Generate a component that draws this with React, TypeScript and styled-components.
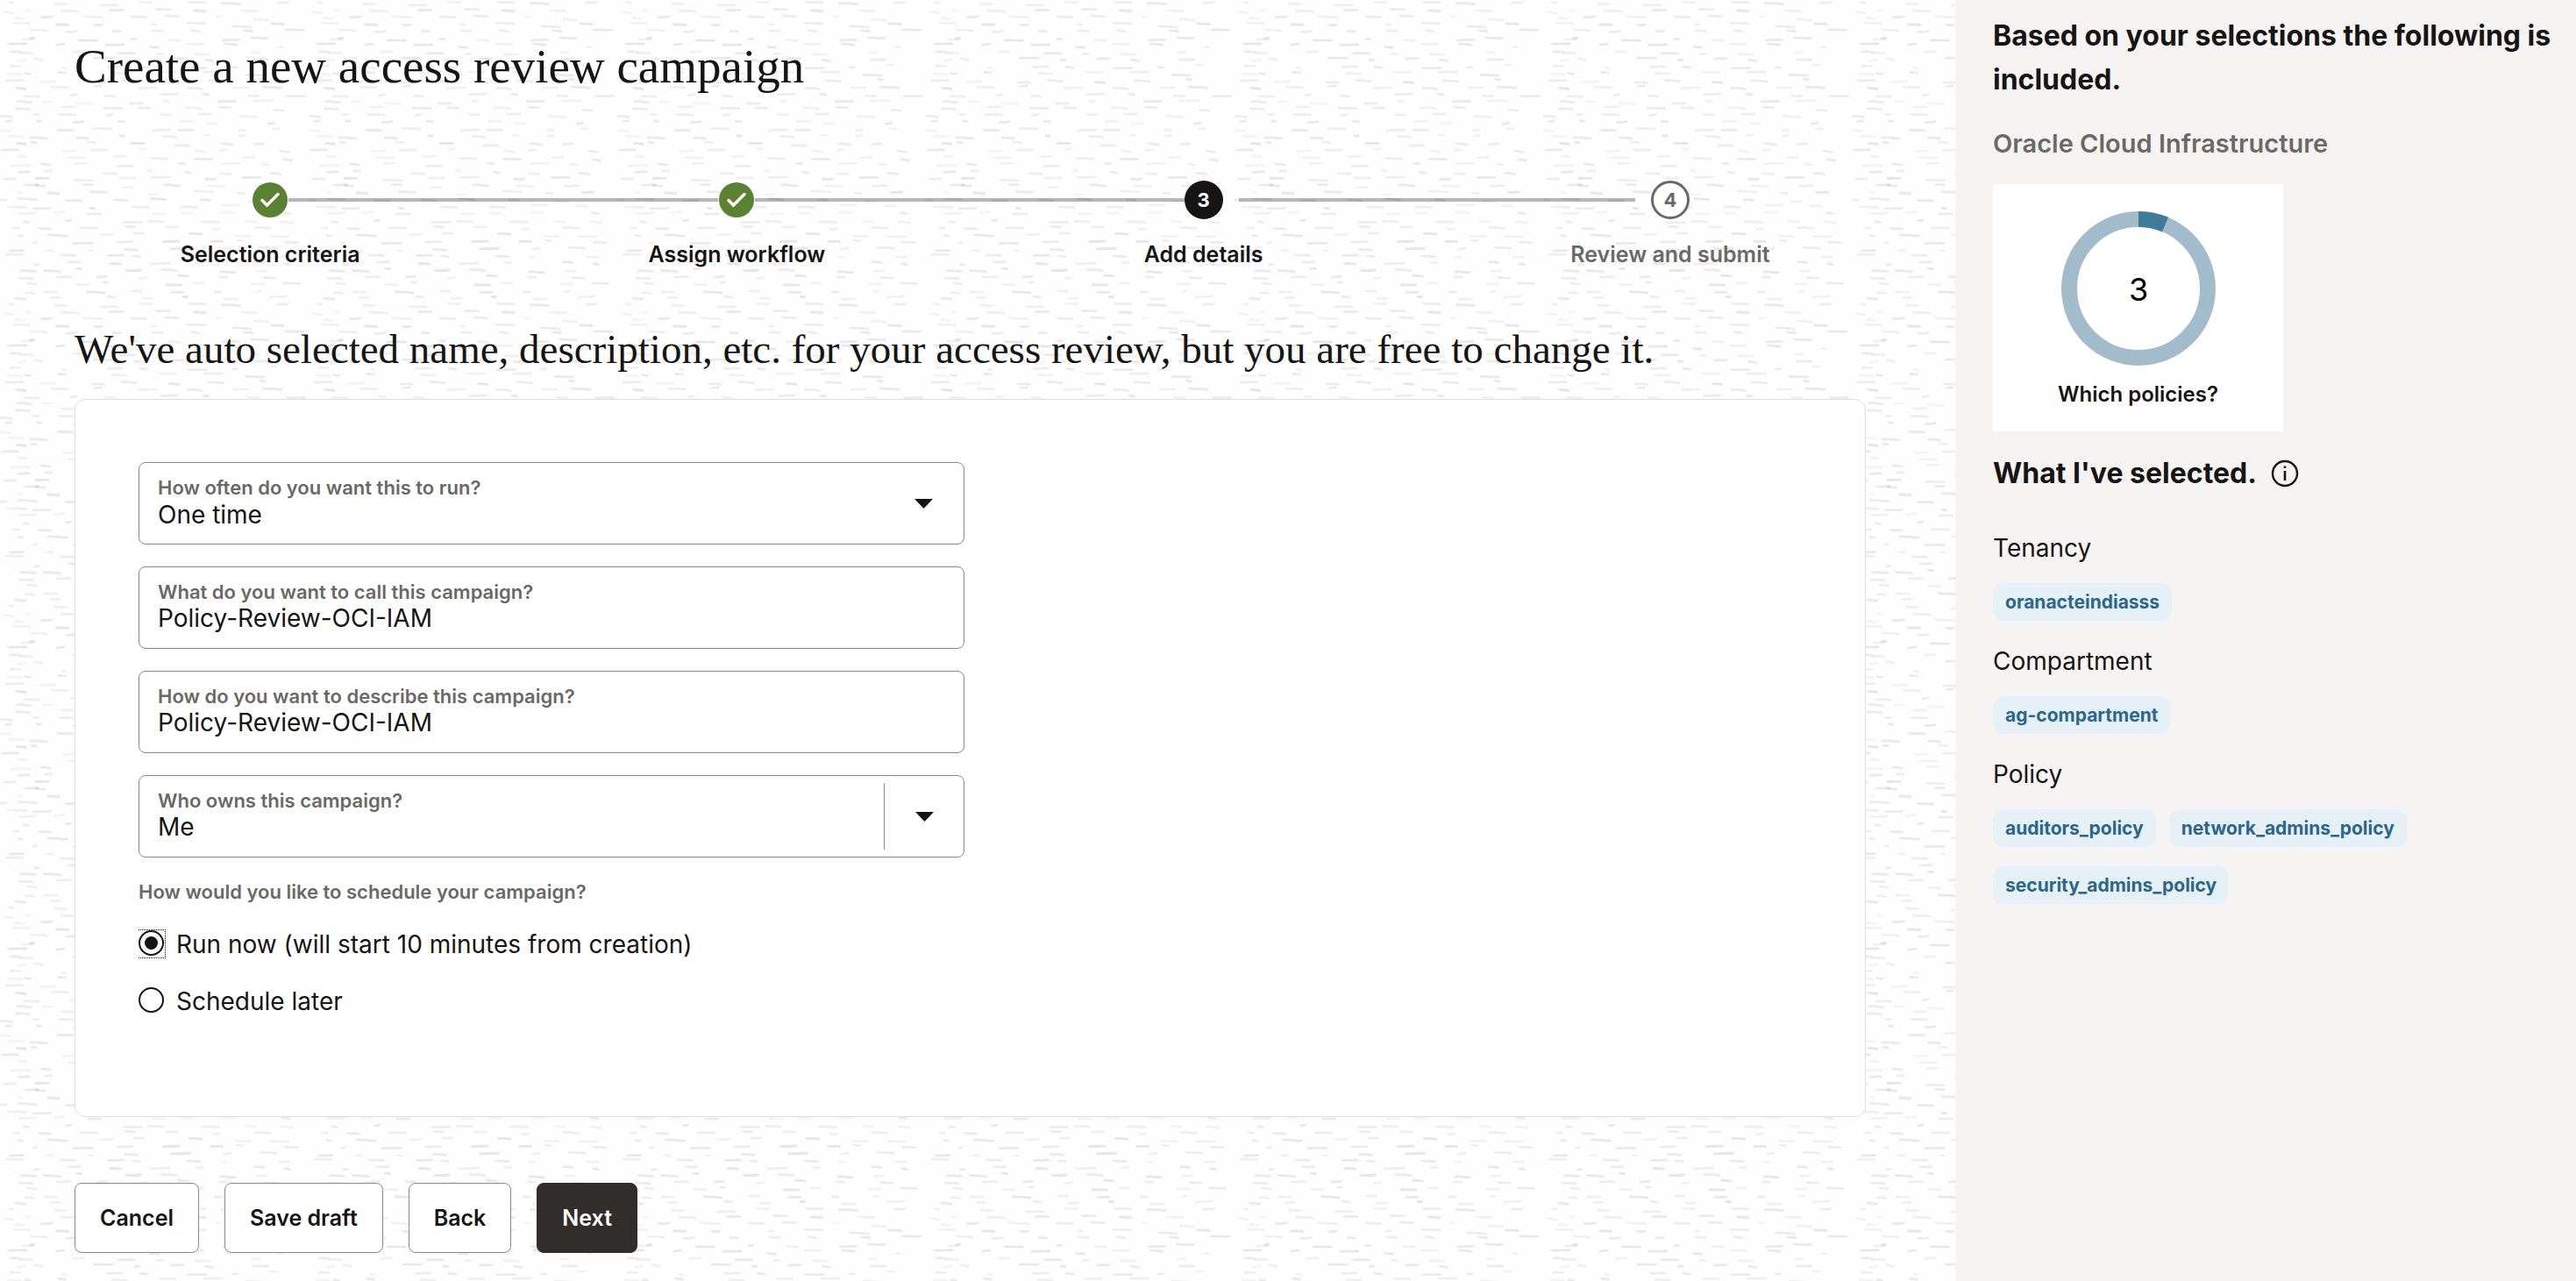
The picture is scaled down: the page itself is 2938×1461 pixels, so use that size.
import React, { useState } from "react";
import styled, { createGlobalStyle } from "styled-components";

const ink = "#161513";
const muted = "#6b6966";
const line = "#8b8986";
const sans = `Inter, "Liberation Sans", sans-serif`;
const serif = `Georgia, "Liberation Serif", serif`;

/* A repeating tile of faint, slightly tilted brush strokes. */
function strokeTile(): string {
  let seed = 4177;
  const next = () => {
    seed = (seed * 16807) % 2147483647;
    return seed / 2147483647;
  };
  const width = 352;
  const height = 344;
  const parts: string[] = [];
  for (let row = 0; row < 43; row++) {
    for (let col = 0; col < 7; col++) {
      const length = 4 + next() * 17;
      const x = (col * 50 + (row % 3) * 17 + next() * 24) % (width - 24);
      const y = row * 8 + 2 + next() * 4;
      const tilt = next() * 1.8 - 0.6;
      const shade = 0.04 + next() * 0.05;
      parts.push(
        `<path d="M${x.toFixed(1)} ${y.toFixed(1)}l${(length / 2).toFixed(1)} ${(tilt * 0.3).toFixed(1)}l${(length / 2).toFixed(1)} ${(tilt * 0.7).toFixed(1)}" stroke-opacity="${shade.toFixed(2)}"/>`
      );
    }
  }
  const svg = `<svg xmlns="http://www.w3.org/2000/svg" width="${width}" height="${height}"><g fill="none" stroke="#000" stroke-width="2.8" stroke-linecap="round">${parts.join("")}</g></svg>`;
  return `url("data:image/svg+xml,${encodeURIComponent(svg)}")`;
}

const texture = strokeTile();

const GlobalStyle = createGlobalStyle`
  *, *::before, *::after { box-sizing: border-box; }
  body { margin: 0; color: ${ink}; font-family: ${sans}; background: #fff; }
  h1, h2, h3, p, ol, ul, fieldset { margin: 0; padding: 0; border: 0; }
  ol, ul { list-style: none; }
  button, input, select { font: inherit; color: inherit; }
`;

const Page = styled.div`
  display: grid;
  grid-template-columns: minmax(0, 1fr) 708px;
  min-height: 100vh;
`;

const Main = styled.main`
  padding: 42px 59px 30px 42px;
  background-color: #fefefe;
  background-image: ${texture};
`;

const Inset = styled.div`
  margin: 0 43px;
`;

const Title = styled.h1`
  font: 400 55px/68px ${serif};
`;

const Subtitle = styled.h2`
  font: 400 47px/56px ${serif};
  margin-bottom: 29px;
`;

const Steps = styled.ol`
  display: grid;
  grid-template-columns: repeat(4, 1fr);
  margin: 96px 0 64px;
`;

const Step = styled.li<{ $muted?: boolean }>`
  display: grid;
  gap: 24px;
  justify-items: center;
  font-size: 25px;
  line-height: 32px;
  font-weight: 600;
  color: ${(p) => (p.$muted ? muted : ink)};
`;

const Track = styled.div`
  display: grid;
  grid-template-columns: 1fr auto 1fr;
  align-items: center;
  width: 100%;
  height: 44px;
`;

const Rail = styled.span<{ $hidden?: boolean; $before?: number; $after?: number }>`
  height: 4px;
  margin-right: ${(p) => p.$before ?? 0}px;
  margin-left: ${(p) => p.$after ?? 0}px;
  background: ${(p) => (p.$hidden ? "transparent" : "rgba(22, 21, 19, 0.3)")};
`;

type StepState = "done" | "current" | "next";

const Marker = styled.span<{ $state: StepState }>`
  display: grid;
  place-items: center;
  width: ${(p) => (p.$state === "done" ? 40 : 44)}px;
  height: ${(p) => (p.$state === "done" ? 40 : 44)}px;
  border-radius: 50%;
  font-size: 22px;
  font-weight: 700;
  line-height: 24px;
  color: ${(p) => (p.$state === "next" ? muted : "#fff")};
  background: ${(p) => ({ done: "#5b8232", current: ink, next: "#fff" })[p.$state]};
  border: ${(p) => (p.$state === "next" ? `3px solid ${muted}` : "0")};
`;

const Card = styled.section`
  padding: 71px 72px;
  min-height: 819px;
  background: #fff;
  border: 1px solid #e0dfde;
  border-radius: 12px;
`;

const Form = styled.form`
  display: grid;
  gap: 25px;
  width: 942px;
  max-width: 100%;
`;

const Field = styled.div`
  display: flex;
  height: 94px;
  border: 1px solid ${line};
  border-radius: 8px;
  background: #fff;
`;

const FieldText = styled.div`
  flex: 1;
  min-width: 0;
  padding: 14px 0 0 21px;
`;

const FieldLabel = styled.label`
  display: block;
  font-size: 22px;
  line-height: 28px;
  font-weight: 600;
  color: ${muted};
`;

const TextInput = styled.input`
  display: block;
  width: 100%;
  height: 32px;
  padding: 0;
  border: 0;
  outline: 0;
  background: transparent;
  font-size: 28px;
`;

const Select = styled.select`
  display: block;
  width: 100%;
  height: 32px;
  padding: 0;
  border: 0;
  outline: 0;
  appearance: none;
  background: transparent;
  font-size: 28px;
`;

const ArrowCell = styled.span`
  display: grid;
  place-items: center;
  width: 91px;
`;

const ArrowButton = styled.button`
  display: grid;
  place-items: center;
  width: 91px;
  margin: 8px 0;
  padding: 0;
  border: 0;
  border-left: 1px solid ${line};
  background: transparent;
`;

const Schedule = styled.fieldset`
  min-width: 0;
`;

const Legend = styled.legend`
  padding: 0;
  margin-bottom: 29px;
  font-size: 22px;
  line-height: 28px;
  font-weight: 600;
  color: ${muted};
`;

const RadioRow = styled.label`
  display: flex;
  align-items: center;
  gap: 12px;
  height: 33px;
  margin-bottom: 32px;
  font-size: 28px;
  line-height: 32px;
`;

const RadioBox = styled.span<{ $focused: boolean }>`
  width: 31px;
  height: 33px;
  border: 1px dotted ${(p) => (p.$focused ? ink : "transparent")};
  border-left: 0;
`;

const Radio = styled.input`
  appearance: none;
  display: grid;
  place-items: center;
  width: 29px;
  height: 29px;
  margin: 0;
  border: 2px solid ${ink};
  border-radius: 50%;
  background: #fff;
  outline: 0;
  &:checked::before {
    content: "";
    width: 15px;
    height: 15px;
    border-radius: 50%;
    background: ${ink};
  }
`;

const Actions = styled.div`
  display: flex;
  gap: 29px;
  margin-top: 75px;
`;

const Button = styled.button<{ $primary?: boolean }>`
  height: 80px;
  padding: 0 28px;
  border: 1px solid ${(p) => (p.$primary ? "#312d2a" : line)};
  border-radius: 8px;
  background: ${(p) => (p.$primary ? "#312d2a" : "#fff")};
  color: ${(p) => (p.$primary ? "#fff" : ink)};
  font-size: 25px;
  font-weight: 600;
`;

const Sidebar = styled.aside`
  padding: 16px 8px 48px 43px;
  background: #f5f4f2;
`;

const SideHeading = styled.h2`
  font-size: 32px;
  line-height: 50px;
  font-weight: 700;
`;

const Provider = styled.h3`
  margin: 28px 0 26px;
  font-size: 29px;
  line-height: 40px;
  font-weight: 600;
  color: ${muted};
`;

const ChartCard = styled.figure`
  display: grid;
  justify-items: center;
  width: 331px;
  margin: 0;
  padding: 30px 0 25px;
  background: #fff;
`;

const Caption = styled.figcaption`
  margin-top: 15px;
  font-size: 24px;
  line-height: 34px;
  font-weight: 600;
`;

const HeadingRow = styled.div`
  display: flex;
  align-items: center;
  gap: 16px;
  margin: 23px 0 42px;
`;

const InfoButton = styled.button`
  display: grid;
  padding: 0;
  border: 0;
  background: none;
`;

const Group = styled.section`
  margin-bottom: 28px;
`;

const GroupName = styled.h3`
  font-size: 28px;
  line-height: 36px;
  font-weight: 400;
  margin-bottom: 22px;
`;

const Chips = styled.ul`
  display: flex;
  flex-wrap: wrap;
  gap: 22px 15px;
`;

const Chip = styled.li`
  height: 43px;
  padding: 0 14px;
  border-radius: 12px;
  background: #e5f1f6;
  color: #2c6789;
  font-size: 21px;
  line-height: 43px;
  font-weight: 700;
`;

const Check = () => (
  <svg width="24" height="20" viewBox="0 0 24 20" aria-hidden="true">
    <path d="M3 10.5L8.5 16L21 3.5" fill="none" stroke="#fff" strokeWidth="3.4" strokeLinecap="round" strokeLinejoin="miter" />
  </svg>
);

const Arrow = () => (
  <svg width="21" height="11" viewBox="0 0 21 11" aria-hidden="true">
    <path d="M0 0H21L10.5 11Z" fill={ink} />
  </svg>
);

const Info = () => (
  <svg width="32" height="32" viewBox="0 0 32 32" aria-hidden="true">
    <circle cx="16" cy="16" r="14" fill="none" stroke={ink} strokeWidth="2.4" />
    <path d="M16 13V24" stroke={ink} strokeWidth="2.6" />
    <path d="M16 7.5V10" stroke={ink} strokeWidth="2.6" />
  </svg>
);

const Donut = ({ value }: { value: number }) => {
  const radius = 79;
  const length = 2 * Math.PI * radius;
  const share = 0.063;
  return (
    <svg width="178" height="178" viewBox="0 0 178 178" role="img" aria-label={`${value} policies`}>
      <circle cx="89" cy="89" r={radius} fill="none" stroke="#a3bccb" strokeWidth="18" />
      <circle
        cx="89"
        cy="89"
        r={radius}
        fill="none"
        stroke="#3f7c9b"
        strokeWidth="18"
        strokeDasharray={`${length * share} ${length}`}
        transform="rotate(-90 89 89)"
      />
      <text x="89" y="103" textAnchor="middle" fontFamily={sans} fontSize="36" fill="#000">
        {value}
      </text>
    </svg>
  );
};

const steps: { name: string; state: StepState }[] = [
  { name: "Selection criteria", state: "done" },
  { name: "Assign workflow", state: "done" },
  { name: "Add details", state: "current" },
  { name: "Review and submit", state: "next" },
];

const afterGap: Record<StepState, number> = { done: 1, current: 18, next: 0 };
const beforeGap: Record<StepState, number> = { done: 1, current: 0, next: 18 };

const groups = [
  { name: "Tenancy", items: ["oranacteindiasss"] },
  { name: "Compartment", items: ["ag-compartment"] },
  { name: "Policy", items: ["auditors_policy", "network_admins_policy", "security_admins_policy"] },
];

export default function App() {
  const [name, setName] = useState("Policy-Review-OCI-IAM");
  const [description, setDescription] = useState("Policy-Review-OCI-IAM");
  const [owner, setOwner] = useState("Me");
  const [schedule, setSchedule] = useState("now");

  return (
    <>
      <GlobalStyle />
      <Page>
        <Main>
          <Inset>
            <Title>Create a new access review campaign</Title>
          </Inset>
          <Steps>
            {steps.map((step, i) => (
              <Step key={step.name} $muted={step.state === "next"}>
                <Track>
                  <Rail $hidden={i === 0} $before={beforeGap[step.state]} />
                  <Marker $state={step.state}>{step.state === "done" ? <Check /> : i + 1}</Marker>
                  <Rail $hidden={i === steps.length - 1} $after={afterGap[step.state]} />
                </Track>
                {step.name}
              </Step>
            ))}
          </Steps>
          <Inset>
            <Subtitle>
              We've auto selected name, description, etc. for your access review, but you are free to change it.
            </Subtitle>
            <Card>
              <Form>
                <Field>
                  <FieldText>
                    <FieldLabel htmlFor="frequency">How often do you want this to run?</FieldLabel>
                    <Select id="frequency" defaultValue="One time">
                      <option>One time</option>
                    </Select>
                  </FieldText>
                  <ArrowCell>
                    <Arrow />
                  </ArrowCell>
                </Field>
                <Field>
                  <FieldText>
                    <FieldLabel htmlFor="name">What do you want to call this campaign?</FieldLabel>
                    <TextInput id="name" value={name} onChange={(e) => setName(e.target.value)} />
                  </FieldText>
                </Field>
                <Field>
                  <FieldText>
                    <FieldLabel htmlFor="description">How do you want to describe this campaign?</FieldLabel>
                    <TextInput id="description" value={description} onChange={(e) => setDescription(e.target.value)} />
                  </FieldText>
                </Field>
                <Field>
                  <FieldText>
                    <FieldLabel htmlFor="owner">Who owns this campaign?</FieldLabel>
                    <TextInput id="owner" value={owner} onChange={(e) => setOwner(e.target.value)} />
                  </FieldText>
                  <ArrowButton type="button" aria-label="Show owners">
                    <Arrow />
                  </ArrowButton>
                </Field>
                <Schedule>
                  <Legend>How would you like to schedule your campaign?</Legend>
                  <RadioRow>
                    <RadioBox $focused={schedule === "now"}>
                      <Radio type="radio" name="schedule" checked={schedule === "now"} onChange={() => setSchedule("now")} />
                    </RadioBox>
                    Run now (will start 10 minutes from creation)
                  </RadioRow>
                  <RadioRow>
                    <RadioBox $focused={schedule === "later"}>
                      <Radio type="radio" name="schedule" checked={schedule === "later"} onChange={() => setSchedule("later")} />
                    </RadioBox>
                    Schedule later
                  </RadioRow>
                </Schedule>
              </Form>
            </Card>
            <Actions>
              <Button type="button">Cancel</Button>
              <Button type="button">Save draft</Button>
              <Button type="button">Back</Button>
              <Button type="button" $primary>
                Next
              </Button>
            </Actions>
          </Inset>
        </Main>
        <Sidebar>
          <SideHeading>Based on your selections the following is included.</SideHeading>
          <Provider>Oracle Cloud Infrastructure</Provider>
          <ChartCard>
            <Donut value={3} />
            <Caption>Which policies?</Caption>
          </ChartCard>
          <HeadingRow>
            <SideHeading>What I've selected.</SideHeading>
            <InfoButton type="button" aria-label="More information">
              <Info />
            </InfoButton>
          </HeadingRow>
          {groups.map((group) => (
            <Group key={group.name}>
              <GroupName>{group.name}</GroupName>
              <Chips>
                {group.items.map((item) => (
                  <Chip key={item}>{item}</Chip>
                ))}
              </Chips>
            </Group>
          ))}
        </Sidebar>
      </Page>
    </>
  );
}
